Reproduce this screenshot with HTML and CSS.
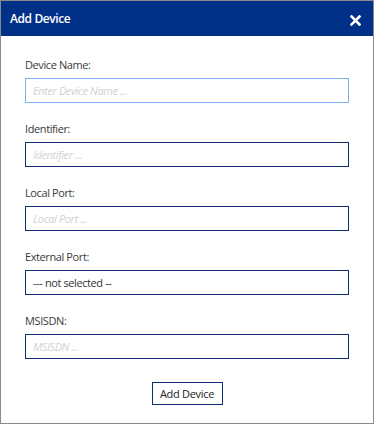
FILE: index.html
```html
<!DOCTYPE html>
<html lang="en">
<head>
    <meta charset="UTF-8">
    <title>Add Device</title>
    <link rel="stylesheet" href="styles.css">
</head>
<body>
    <div class="dialog">
        <!-- Header -->
        <div class="dialog-header">
            <span class="dialog-title">Add Device</span>
            <span class="close">
                <svg width="11" height="11" viewBox="0 0 11 11">
                    <path d="M1.5 1.5 L9.5 9.5 M9.5 1.5 L1.5 9.5" stroke="#ffffff" stroke-width="2.6" stroke-linecap="square"/>
                </svg>
            </span>
        </div>

        <!-- Form -->
        <div class="dialog-body">
            <div class="field">
                <label>Device Name:</label>
                <input type="text" class="input focused" placeholder="Enter Device Name ...">
            </div>
            <div class="field">
                <label>Identifier:</label>
                <input type="text" class="input" placeholder="Identifier ...">
            </div>
            <div class="field">
                <label>Local Port:</label>
                <input type="text" class="input" placeholder="Local Port ...">
            </div>
            <div class="field">
                <label>External Port:</label>
                <div class="input select">--- not selected --</div>
            </div>
            <div class="field">
                <label>MSISDN:</label>
                <input type="text" class="input" placeholder="MSISDN ...">
            </div>
            <div class="actions">
                <button class="button">Add Device</button>
            </div>
        </div>
    </div>
</body>
</html>
```

FILE: styles.css
```css
/* General Styles */
body {
    margin: 0;
    padding: 0;
    font-family: "Open Sans", "Noto Sans", sans-serif;
    background-color: #ffffff;
}

.dialog {
    width: 374px;
    height: 424px;
    box-sizing: border-box;
    border: 1px solid #8a8a8a;
    background-color: #ffffff;
}

/* Header */
.dialog-header {
    height: 35px;
    background-color: #003087;
    display: flex;
    align-items: center;
    justify-content: space-between;
    padding: 0 12px 0 9px;
}

.dialog-title {
    color: #ffffff;
    font-size: 12px;
    font-weight: 600;
    letter-spacing: -0.4px;
}

.close {
    display: flex;
    margin-top: 3px;
}

/* Form */
.dialog-body {
    padding: 21px 24px 0 24px;
}

.field {
    margin-bottom: 18px;
}

.field label {
    display: block;
    height: 16px;
    line-height: 16px;
    font-size: 11px;
    letter-spacing: -0.4px;
    color: #3a3a3a;
    margin-bottom: 5px;
}

.input {
    display: block;
    box-sizing: border-box;
    width: 324px;
    height: 25px;
    margin: 0;
    padding: 0 7px;
    border: 1px solid #0d2c74;
    background-color: #ffffff;
    font-family: "Open Sans", "Noto Sans", sans-serif;
    font-size: 11px;
    letter-spacing: -0.4px;
    color: #333333;
    outline: none;
}

.input::placeholder {
    color: #d2d2d2;
    font-style: italic;
}

.input.focused {
    border-color: #7ab3ef;
}

.select {
    line-height: 23px;
    color: #333333;
}

/* Button */
.actions {
    display: flex;
    justify-content: center;
    padding-top: 5px;
}

.button {
    width: 71px;
    height: 23px;
    padding: 0;
    border: 1px solid #0d2c74;
    background-color: #ffffff;
    font-family: "Open Sans", "Noto Sans", sans-serif;
    font-size: 11px;
    letter-spacing: -0.3px;
    color: #222222;
    cursor: pointer;
}
```
